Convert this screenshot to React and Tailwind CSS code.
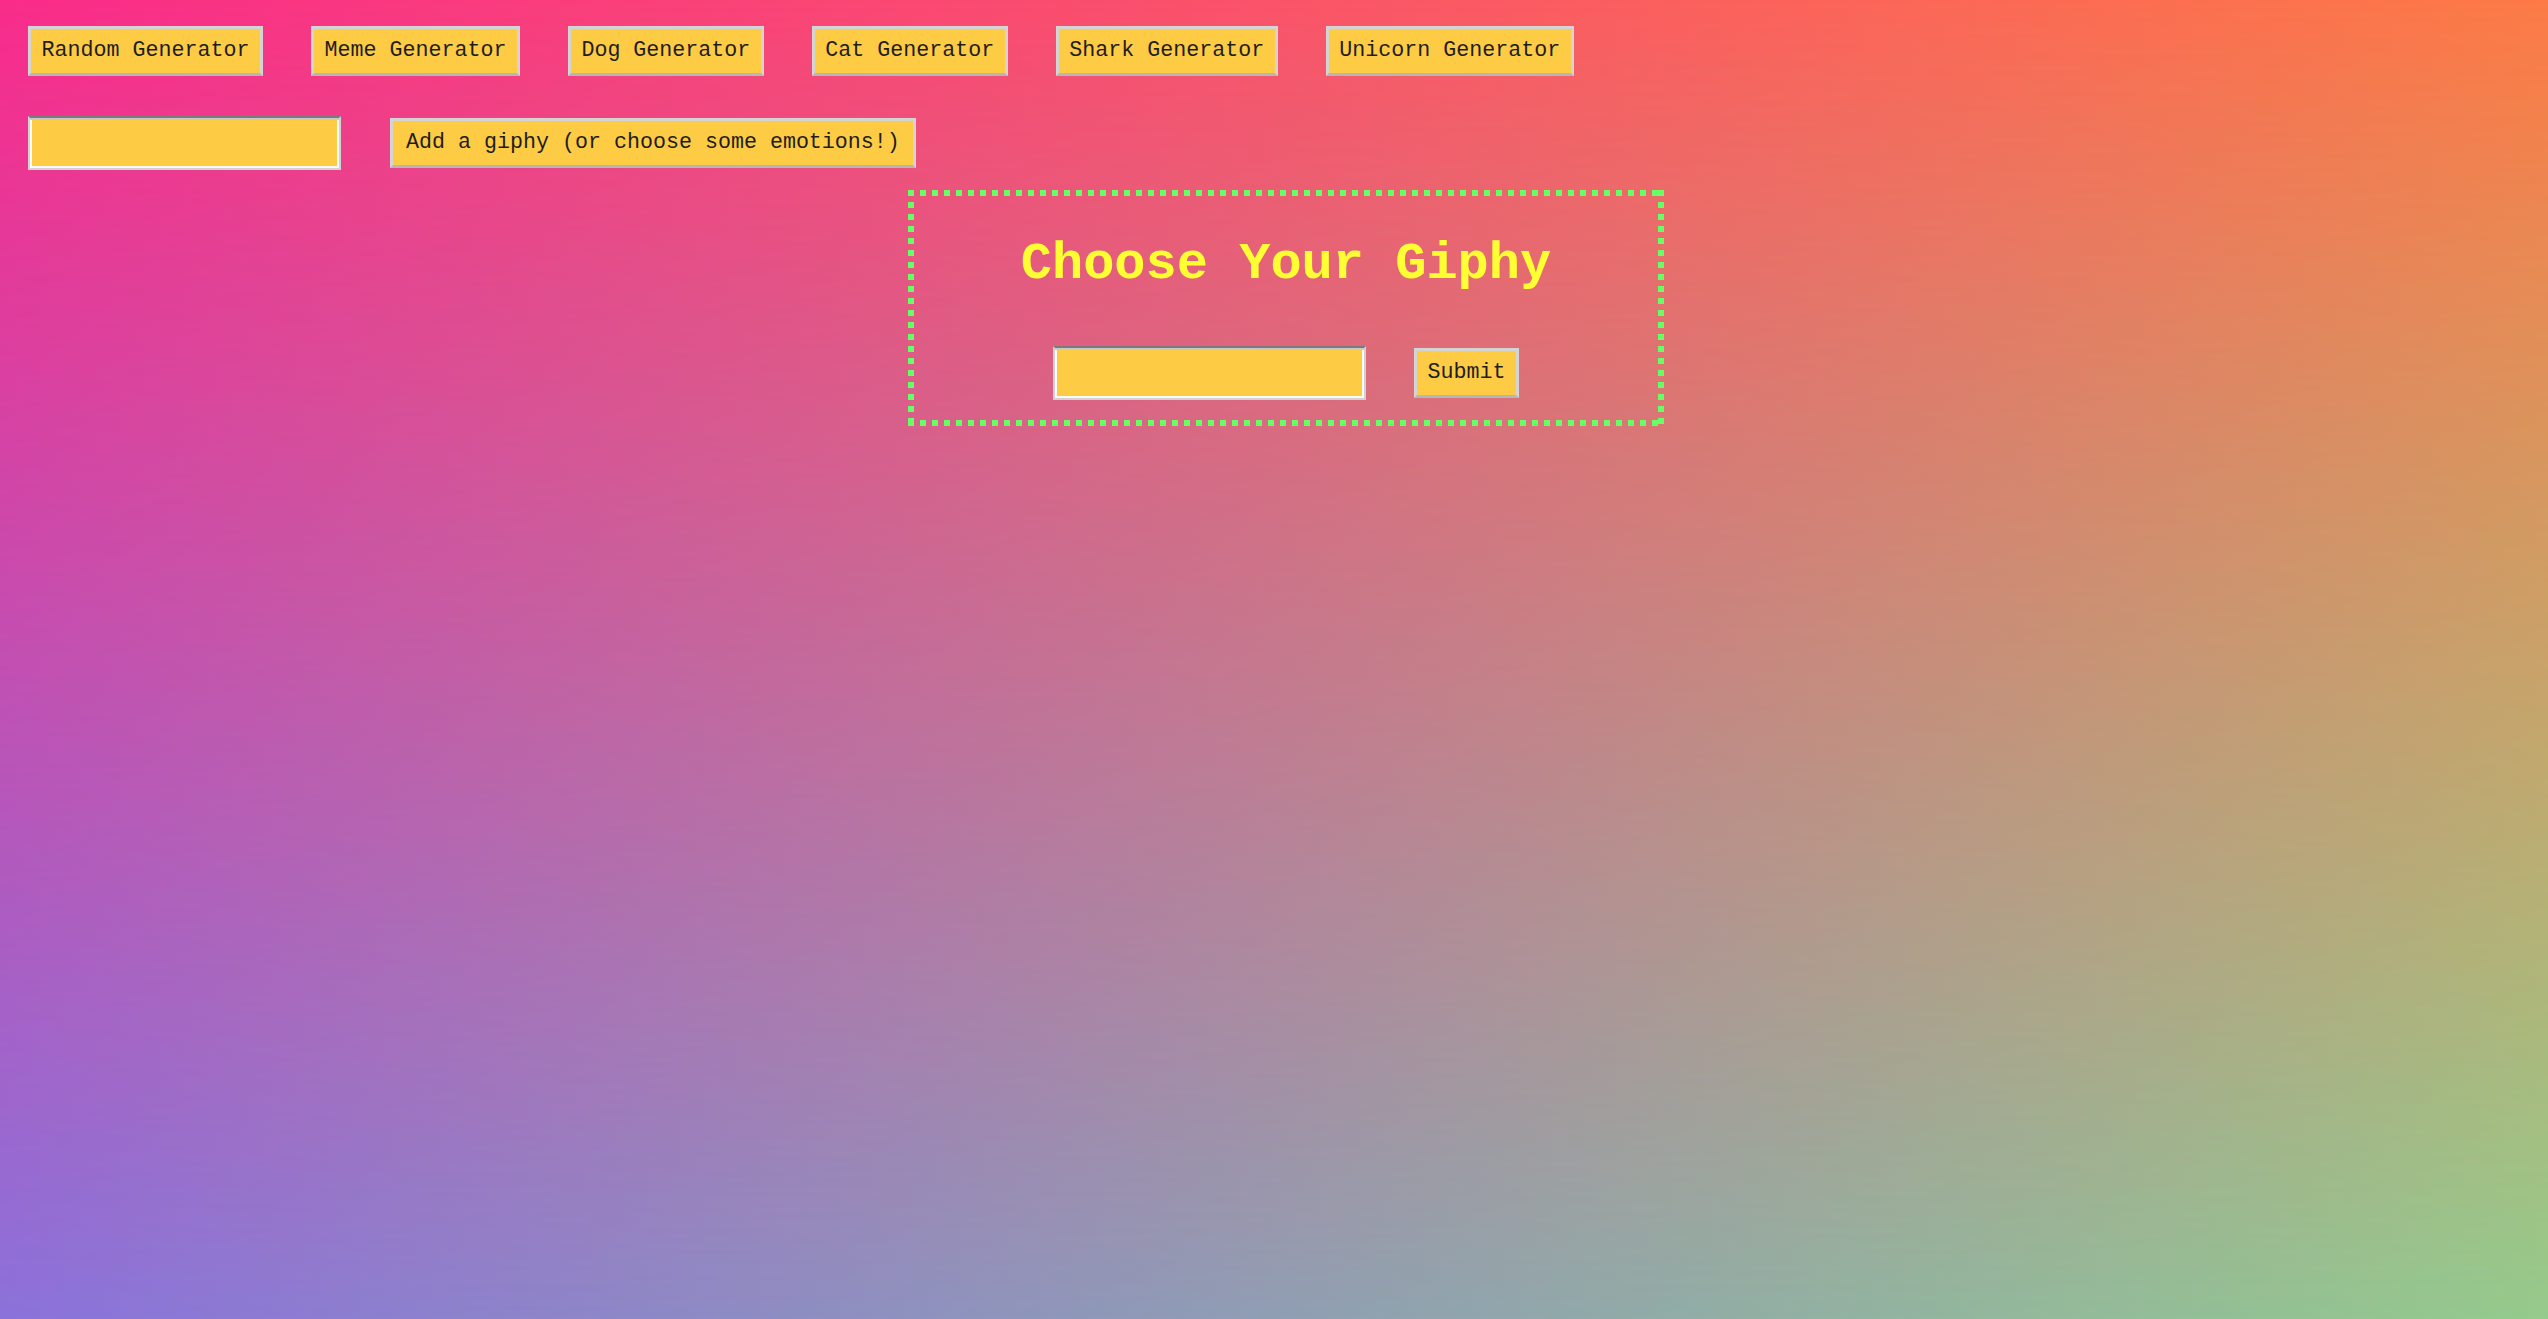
import React from "react";

// Botones de generadores
const generators = [
  "Random Generator",
  "Meme Generator",
  "Dog Generator",
  "Cat Generator",
  "Shark Generator",
  "Unicorn Generator",
];

const Btn = ({ children, wide }) => (
  <button
    className={
      (wide ? "px-[13px] " : "px-[10.5px] ") +
      "h-[50px] bg-[#fecb45] text-[#1e1e1e] text-[21.67px] leading-none border-[3px] border-[#d4d4d4] border-b-[#b6b6b6] whitespace-nowrap font-['Liberation_Mono',monospace]"
    }
  >
    {children}
  </button>
);

const Field = () => (
  <input
    type="text"
    className="h-[54px] w-[313px] bg-[#fecb45] border-2 border-[#d2d2d2] border-t-[#7b7b7b] shadow-[inset_0_2px_0_#c8c8c8,inset_2px_0_0_#fafafa,inset_0_-2px_0_#fafafa,inset_-2px_0_0_#fafafa] outline-none text-[21.67px] px-2 font-['Liberation_Mono',monospace]"
  />
);

export default function App() {
  return (
    <div className="relative min-h-screen bg-[linear-gradient(to_right,#8b72db,#95cb8c)] font-['Liberation_Mono',monospace]">
      {/* capa superior del degradado */}
      <div className="absolute inset-0 bg-[linear-gradient(to_right,#f92c8a,#fc7a46)] [mask-image:linear-gradient(to_bottom,#000,transparent)]" />

      <div className="relative pt-[26px]">
        <div className="flex items-center gap-[48px] pl-[28px]">
          {generators.map((g) => (
            <Btn key={g}>{g}</Btn>
          ))}
        </div>

        <div className="flex items-center gap-[49px] pl-[28px] mt-[40px]">
          <Field />
          <Btn wide>Add a giphy (or choose some emotions!)</Btn>
        </div>

        <div className="flex justify-center pl-[24px] mt-[20px]">
          <div className="w-[756px] h-[236px] p-[6px] flex flex-col items-center [background:repeating-linear-gradient(90deg,#66ff66_0_6px,transparent_6px_12px)_top_left/100%_6px_no-repeat,repeating-linear-gradient(90deg,#66ff66_0_6px,transparent_6px_12px)_bottom_left/100%_6px_no-repeat,repeating-linear-gradient(180deg,#66ff66_0_6px,transparent_6px_12px)_top_left/6px_100%_no-repeat,repeating-linear-gradient(180deg,#66ff66_0_6px,transparent_6px_12px)_top_right/6px_100%_no-repeat]">
            <h1 className="mt-[39px] text-[52px] leading-[59px] font-bold text-[#ffff33]">
              Choose Your Giphy
            </h1>
            <div className="flex items-center gap-[48px] mt-[52px]">
              <Field />
              <Btn>Submit</Btn>
            </div>
          </div>
        </div>
      </div>
    </div>
  );
}
